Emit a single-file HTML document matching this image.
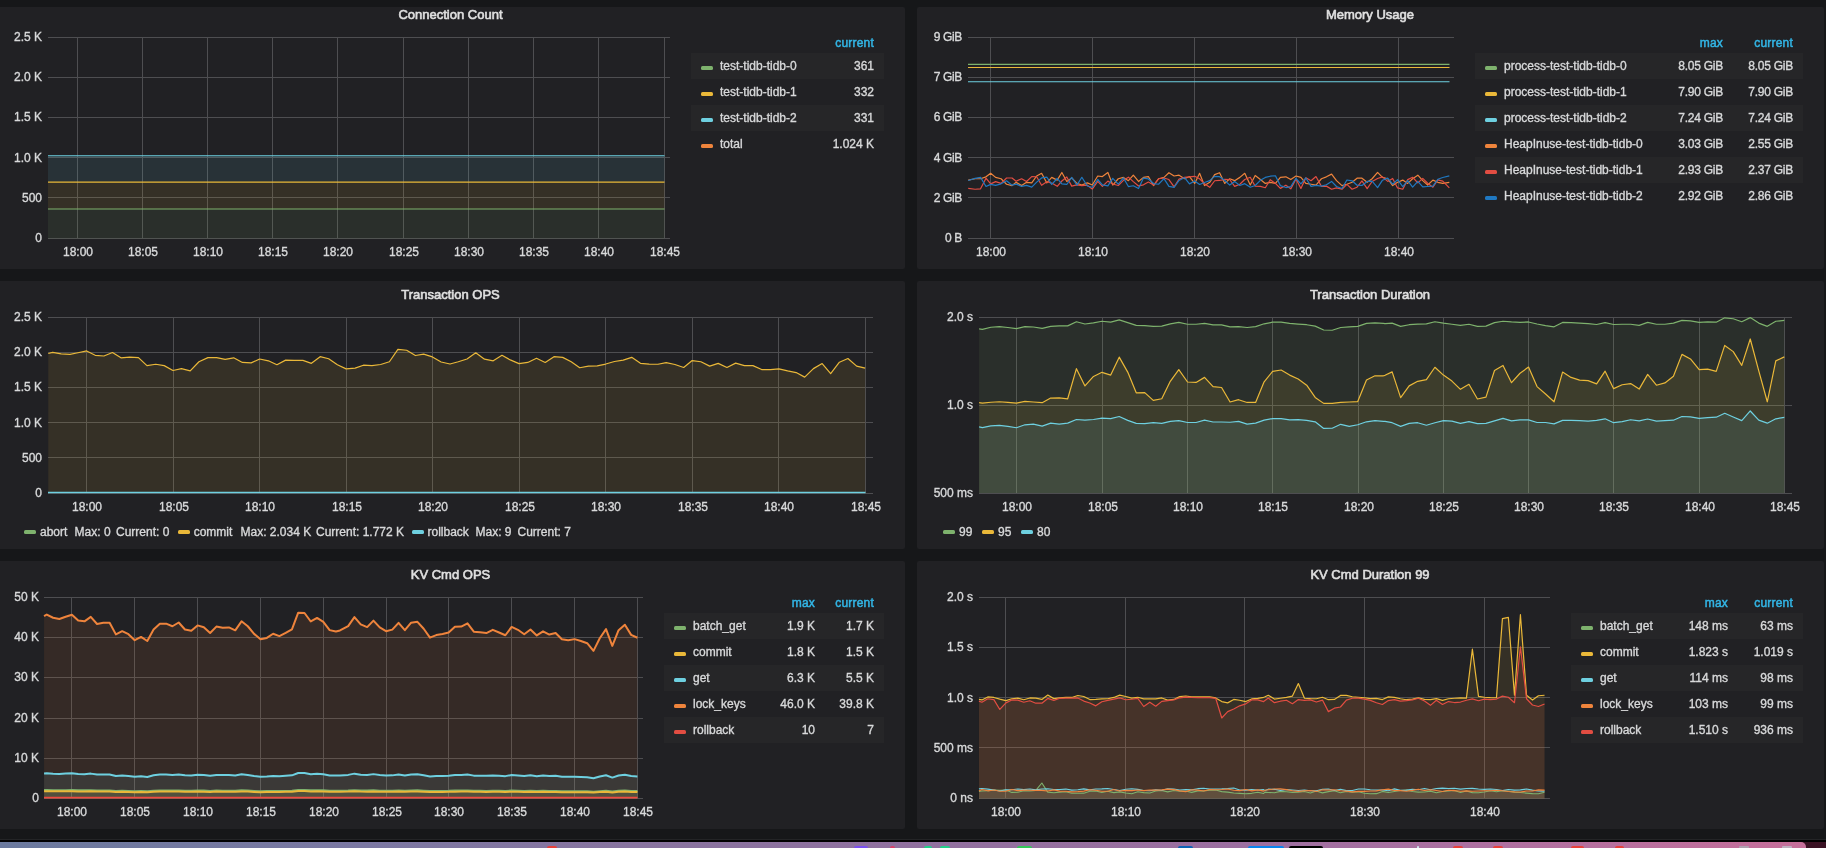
<!DOCTYPE html>
<html lang="en"><head><meta charset="utf-8"><title>TiDB Dashboard</title>
<style>
html,body{margin:0;padding:0;}
body{width:1826px;height:848px;overflow:hidden;background:#161719;position:relative;font-family:"Liberation Sans",sans-serif;font-size:12px;color:#d8d9da;}
.panel{position:absolute;background:#212124;border-radius:2px;}
.t{position:absolute;white-space:nowrap;line-height:14px;height:14px;}
.title{text-align:center;font-size:13px;line-height:20px;height:20px;color:#e0e0e0;-webkit-text-stroke:0.6px #e0e0e0;}
.yl{text-align:right;}
.xl{text-align:center;}
.lh{text-align:right;color:#33b5e5;letter-spacing:0.2px;}
.lv{text-align:right;}
.row{position:absolute;height:26px;}
.row.odd{background:#262628;}
.sw{position:absolute;width:12px;height:3.5px;border-radius:1.5px;}
svg{position:absolute;left:0;top:0;}
.txt{position:absolute;left:0;top:0;width:1826px;height:848px;will-change:transform;-webkit-text-stroke:0.35px #d8d9da;}
.lh{-webkit-text-stroke:0.5px #33b5e5;}
.b1{position:absolute;left:0;top:839px;width:1826px;height:1px;background:#232426;}
.b2{position:absolute;left:0;top:840px;width:1826px;height:2px;background:#000;}
.dock{position:absolute;left:0;top:842px;width:1806px;height:6px;background:linear-gradient(90deg,#6b7a9e 0%,#7b78a2 20%,#88749f 35%,#93709f 55%,#9d6fa0 70%,#ad70a0 82%,#c66f9a 100%);border-top-right-radius:5px;}
.dockend{position:absolute;left:1800px;top:842px;width:26px;height:6px;background:#3b1224;}
.ic{position:absolute;top:846px;height:2px;}
</style></head>
<body>
<div class="panel" style="left:-2px;top:7px;width:907px;height:262px"></div>
<div class="panel" style="left:917px;top:7px;width:907px;height:262px"></div>
<div class="panel" style="left:-2px;top:281px;width:907px;height:268px"></div>
<div class="panel" style="left:917px;top:281px;width:907px;height:268px"></div>
<div class="panel" style="left:-2px;top:561px;width:907px;height:268px"></div>
<div class="panel" style="left:917px;top:561px;width:907px;height:268px"></div>
<svg width="1826" height="848" viewBox="0 0 1826 848">
<rect x="664" y="37" width="1" height="202" fill="#4e4e51"/>
<rect x="598" y="37" width="1" height="202" fill="#4e4e51"/>
<rect x="533" y="37" width="1" height="202" fill="#4e4e51"/>
<rect x="468" y="37" width="1" height="202" fill="#4e4e51"/>
<rect x="403" y="37" width="1" height="202" fill="#4e4e51"/>
<rect x="337" y="37" width="1" height="202" fill="#4e4e51"/>
<rect x="272" y="37" width="1" height="202" fill="#4e4e51"/>
<rect x="207" y="37" width="1" height="202" fill="#4e4e51"/>
<rect x="142" y="37" width="1" height="202" fill="#4e4e51"/>
<rect x="77" y="37" width="1" height="202" fill="#4e4e51"/>
<rect x="48" y="238" width="622" height="1" fill="#4e4e51"/>
<rect x="48" y="197" width="622" height="1" fill="#4e4e51"/>
<rect x="48" y="157" width="622" height="1" fill="#4e4e51"/>
<rect x="48" y="117" width="622" height="1" fill="#4e4e51"/>
<rect x="48" y="77" width="622" height="1" fill="#4e4e51"/>
<rect x="48" y="37" width="622" height="1" fill="#4e4e51"/>
<rect x="48" y="209" width="616.5" height="29.5" fill="#7EB26D" fill-opacity="0.1"/>
<rect x="48" y="182.1" width="616.5" height="26.9" fill="#EAB839" fill-opacity="0.1"/>
<rect x="48" y="155.7" width="616.5" height="26.4" fill="#6ED0E0" fill-opacity="0.1"/>
<line x1="48" y1="209" x2="664.5" y2="209" stroke="#7EB26D" stroke-width="1.1"/>
<line x1="48" y1="182.1" x2="664.5" y2="182.1" stroke="#EAB839" stroke-width="1.1"/>
<line x1="48" y1="155.7" x2="664.5" y2="155.7" stroke="#6ED0E0" stroke-width="1.1"/>
<rect x="1398" y="37" width="1" height="202" fill="#4e4e51"/>
<rect x="1296" y="37" width="1" height="202" fill="#4e4e51"/>
<rect x="1194" y="37" width="1" height="202" fill="#4e4e51"/>
<rect x="1092" y="37" width="1" height="202" fill="#4e4e51"/>
<rect x="990" y="37" width="1" height="202" fill="#4e4e51"/>
<rect x="968" y="238" width="486" height="1" fill="#4e4e51"/>
<rect x="968" y="197" width="486" height="1" fill="#4e4e51"/>
<rect x="968" y="157" width="486" height="1" fill="#4e4e51"/>
<rect x="968" y="117" width="486" height="1" fill="#4e4e51"/>
<rect x="968" y="77" width="486" height="1" fill="#4e4e51"/>
<rect x="968" y="37" width="486" height="1" fill="#4e4e51"/>
<line x1="968" y1="64.4" x2="1449.5" y2="64.4" stroke="#7EB26D" stroke-width="1.1"/>
<line x1="968" y1="67.5" x2="1449.5" y2="67.5" stroke="#EAB839" stroke-width="1.1"/>
<line x1="968" y1="81.8" x2="1449.5" y2="81.8" stroke="#6ED0E0" stroke-width="1.1"/>
<polyline points="968.21,180.12 975.06,178.75 980.54,178.75 986.01,176.83 990.67,173.27 995.6,177.38 1001.07,178.75 1006.55,184.23 1012.03,185.6 1016.13,182.31 1021.61,185.6 1026.54,182.31 1031.74,182.86 1036.67,176.01 1041.6,173.27 1046.8,182.86 1051.73,177.38 1057.21,180.12 1061.86,172.45 1066.79,181.49 1071.72,177.93 1076.92,183.41 1081.85,185.05 1087.33,182.86 1092.26,185.05 1097.73,176.01 1102.39,176.56 1107.86,172.45 1112.79,185.05 1118.27,178.75 1123.47,177.38 1128.4,180.67 1133.33,175.19 1138.53,181.49 1143.46,177.38 1148.39,176.56 1153.59,185.6 1158.52,178.75 1164,177.38 1168.93,172.73 1174.13,176.01 1179.06,175.19 1184.53,178.75 1189.46,176.56 1194.67,183.41 1199.59,173.27 1204.52,185.6 1209.73,182.31 1214.65,174.64 1219.58,172.73 1224.79,183.41 1229.72,178.75 1234.64,180.67 1239.85,177.38 1244.78,173.27 1250.25,185.05 1255.18,175.47 1260.38,179.57 1265.31,183.41 1270.24,182.31 1275.44,183.41 1280.37,177.38 1285.85,176.83 1290.78,179.57 1295.98,176.01 1300.91,177.38 1305.84,183.41 1311.04,184.23 1315.97,185.05 1321.45,178.75 1326.37,176.83 1331.58,174.1 1336.51,180.67 1341.98,185.6 1346.91,184.23 1352.11,182.31 1357.04,178.2 1361.97,178.2 1367.17,182.31 1372.1,178.75 1377.58,172.45 1382.51,177.38 1387.71,178.75 1392.64,185.6 1397.57,182.31 1402.77,180.12 1407.7,183.41 1412.63,178.75 1417.83,175.19 1422.76,180.67 1427.69,185.05 1432.89,180.12 1437.82,182.31 1442.75,183.41 1449.32,182.31" fill="none" stroke="#EF843C" stroke-width="1.2" stroke-linejoin="round"/>
<polyline points="968.21,188.36 975.06,189.26 980.54,188.79 986.01,178.16 990.67,183.91 995.6,181.59 1001.07,183.37 1006.55,178 1012.03,178.02 1016.13,181.2 1021.61,178.73 1026.54,181.45 1031.74,176.67 1036.67,176.73 1041.6,185.25 1046.8,181.72 1051.73,183.05 1057.21,186.3 1061.86,181 1066.79,176.95 1071.72,186.12 1076.92,184.83 1081.85,185.59 1087.33,185.2 1092.26,189.11 1097.73,181.38 1102.39,186.39 1107.86,181.13 1112.79,183.98 1118.27,185.52 1123.47,180.34 1128.4,177.17 1133.33,181.59 1138.53,185.93 1143.46,184.82 1148.39,182.06 1153.59,185.06 1158.52,178.76 1164,177.97 1168.93,179.55 1174.13,186.8 1179.06,179.12 1184.53,177.32 1189.46,176.94 1194.67,176.28 1199.59,178.77 1204.52,183.71 1209.73,187.35 1214.65,180.76 1219.58,180.47 1224.79,179.42 1229.72,179.49 1234.64,186.37 1239.85,184.26 1244.78,179.53 1250.25,177.29 1255.18,186.17 1260.38,186.35 1265.31,187.76 1270.24,179.71 1275.44,183.4 1280.37,188.36 1285.85,185.15 1290.78,188.85 1295.98,179.05 1300.91,188.42 1305.84,177.83 1311.04,180.75 1315.97,176.58 1321.45,186.37 1326.37,186.14 1331.58,189.25 1336.51,187.84 1341.98,189.2 1346.91,184.43 1352.11,189.19 1357.04,187.21 1361.97,180.94 1367.17,188.64 1372.1,181.51 1377.58,178.46 1382.51,176.84 1387.71,181.41 1392.64,178.48 1397.57,187.92 1402.77,189.23 1407.7,179.64 1412.63,177.27 1417.83,182.83 1422.76,178.36 1427.69,183.21 1432.89,187.21 1437.82,179.82 1442.75,181.07 1449.32,187.89" fill="none" stroke="#E24D42" stroke-width="1.2" stroke-linejoin="round"/>
<polyline points="968.21,180.46 975.06,178.42 980.54,177.38 986.01,186.44 990.67,184.37 995.6,185.38 1001.07,183.83 1006.55,180.77 1012.03,185.19 1016.13,184.13 1021.61,186.32 1026.54,185.4 1031.74,187.15 1036.67,182.1 1041.6,177.94 1046.8,177.13 1051.73,184.44 1057.21,178.48 1061.86,183.91 1066.79,184.47 1071.72,177.42 1076.92,185.15 1081.85,177.29 1087.33,185.97 1092.26,187.27 1097.73,179.49 1102.39,184.9 1107.86,185.94 1112.79,178.33 1118.27,184.06 1123.47,177.98 1128.4,186.54 1133.33,185.75 1138.53,188.58 1143.46,178.11 1148.39,178.95 1153.59,183.57 1158.52,184.25 1164,178.6 1168.93,186.41 1174.13,187.4 1179.06,180.44 1184.53,177.54 1189.46,183.89 1194.67,181.08 1199.59,184.47 1204.52,182.51 1209.73,180.67 1214.65,176.38 1219.58,176.7 1224.79,180.5 1229.72,185.1 1234.64,181.54 1239.85,185.47 1244.78,183.65 1250.25,187.24 1255.18,185.49 1260.38,180.33 1265.31,177.45 1270.24,176.22 1275.44,175.75 1280.37,185.64 1285.85,187.54 1290.78,186.62 1295.98,178.29 1300.91,183.94 1305.84,177.99 1311.04,186.31 1315.97,185.32 1321.45,186.2 1326.37,184.74 1331.58,181.38 1336.51,186.52 1341.98,188.55 1346.91,179.99 1352.11,180.79 1357.04,185.21 1361.97,185.41 1367.17,181.4 1372.1,181.22 1377.58,187.65 1382.51,180.2 1387.71,178.17 1392.64,184.21 1397.57,179.59 1402.77,186.68 1407.7,180.59 1412.63,187.12 1417.83,181.31 1422.76,186.87 1427.69,186.5 1432.89,186.22 1437.82,179.28 1442.75,177.52 1449.32,175.9" fill="none" stroke="#1F78C1" stroke-width="1.2" stroke-linejoin="round"/>
<rect x="865" y="317" width="1" height="177" fill="#4e4e51"/>
<rect x="778" y="317" width="1" height="177" fill="#4e4e51"/>
<rect x="692" y="317" width="1" height="177" fill="#4e4e51"/>
<rect x="605" y="317" width="1" height="177" fill="#4e4e51"/>
<rect x="519" y="317" width="1" height="177" fill="#4e4e51"/>
<rect x="432" y="317" width="1" height="177" fill="#4e4e51"/>
<rect x="346" y="317" width="1" height="177" fill="#4e4e51"/>
<rect x="259" y="317" width="1" height="177" fill="#4e4e51"/>
<rect x="173" y="317" width="1" height="177" fill="#4e4e51"/>
<rect x="86" y="317" width="1" height="177" fill="#4e4e51"/>
<rect x="48" y="493" width="825" height="1" fill="#4e4e51"/>
<rect x="48" y="457" width="825" height="1" fill="#4e4e51"/>
<rect x="48" y="422" width="825" height="1" fill="#4e4e51"/>
<rect x="48" y="387" width="825" height="1" fill="#4e4e51"/>
<rect x="48" y="352" width="825" height="1" fill="#4e4e51"/>
<rect x="48" y="317" width="825" height="1" fill="#4e4e51"/>
<polygon points="48.28,353.46 52.65,352.31 61.16,353.92 69.9,354.38 77.95,352.77 86.69,350.93 95.2,355.3 103.94,355.99 112.45,352.54 120.96,357.83 129.7,357.14 138.44,357.6 146.96,365.65 155.7,364.27 164.21,365.65 172.95,370.48 181.46,368.64 190.2,370.94 198.94,361.74 207.91,357.6 216.65,357.6 225.16,359.44 233.67,357.83 242.41,362.43 251.15,362.89 259.66,358.98 268.4,360.82 276.91,364.73 285.65,360.13 294.16,360.36 302.9,360.36 311.41,363.35 320.15,356.68 328.66,358.75 337.4,364.73 346.14,368.87 355.12,368.18 363.4,365.19 371.91,365.65 380.65,364.5 389.39,361.74 397.9,349.32 406.64,350.24 415.38,355.53 423.66,354.15 432.4,356.91 441.14,361.97 450,364.04 458.28,361.74 467.02,358.98 475.76,352.77 484.5,359.21 493.24,360.82 501.98,355.3 510.26,359.9 519,363.58 527.74,362.43 536.48,358.29 545.22,362.43 553.96,356.68 562.71,357.37 571.22,361.74 579.73,367.72 588.47,366.11 597.21,365.88 605.72,364.04 614.46,361.51 623.2,360.13 631.71,357.37 640.45,363.35 649.19,364.04 657.93,364.27 666.21,362.66 674.95,364.5 683.69,367.49 692.2,360.59 700.94,361.74 709.68,366.11 718.19,363.35 726.93,367.49 735.67,363.12 744.41,365.65 752.92,365.65 761.66,369.56 770.41,369.56 778.92,368.87 787.66,370.94 796.17,372.55 804.68,377.15 813.42,368.64 822.16,363.58 830.67,373.7 839.41,362.2 847.92,358.52 856.66,366.11 865.17,368.18 865.17,492.5 48.28,492.5" fill="#EAB839" fill-opacity="0.1"/>
<polyline points="48.28,353.46 52.65,352.31 61.16,353.92 69.9,354.38 77.95,352.77 86.69,350.93 95.2,355.3 103.94,355.99 112.45,352.54 120.96,357.83 129.7,357.14 138.44,357.6 146.96,365.65 155.7,364.27 164.21,365.65 172.95,370.48 181.46,368.64 190.2,370.94 198.94,361.74 207.91,357.6 216.65,357.6 225.16,359.44 233.67,357.83 242.41,362.43 251.15,362.89 259.66,358.98 268.4,360.82 276.91,364.73 285.65,360.13 294.16,360.36 302.9,360.36 311.41,363.35 320.15,356.68 328.66,358.75 337.4,364.73 346.14,368.87 355.12,368.18 363.4,365.19 371.91,365.65 380.65,364.5 389.39,361.74 397.9,349.32 406.64,350.24 415.38,355.53 423.66,354.15 432.4,356.91 441.14,361.97 450,364.04 458.28,361.74 467.02,358.98 475.76,352.77 484.5,359.21 493.24,360.82 501.98,355.3 510.26,359.9 519,363.58 527.74,362.43 536.48,358.29 545.22,362.43 553.96,356.68 562.71,357.37 571.22,361.74 579.73,367.72 588.47,366.11 597.21,365.88 605.72,364.04 614.46,361.51 623.2,360.13 631.71,357.37 640.45,363.35 649.19,364.04 657.93,364.27 666.21,362.66 674.95,364.5 683.69,367.49 692.2,360.59 700.94,361.74 709.68,366.11 718.19,363.35 726.93,367.49 735.67,363.12 744.41,365.65 752.92,365.65 761.66,369.56 770.41,369.56 778.92,368.87 787.66,370.94 796.17,372.55 804.68,377.15 813.42,368.64 822.16,363.58 830.67,373.7 839.41,362.2 847.92,358.52 856.66,366.11 865.17,368.18" fill="none" stroke="#EAB839" stroke-width="1.2" stroke-linejoin="round"/>
<line x1="48" y1="492.4" x2="865.5" y2="492.4" stroke="#6ED0E0" stroke-width="1.5"/>
<rect x="1784" y="317" width="1" height="177" fill="#4e4e51"/>
<rect x="1699" y="317" width="1" height="177" fill="#4e4e51"/>
<rect x="1613" y="317" width="1" height="177" fill="#4e4e51"/>
<rect x="1528" y="317" width="1" height="177" fill="#4e4e51"/>
<rect x="1443" y="317" width="1" height="177" fill="#4e4e51"/>
<rect x="1358" y="317" width="1" height="177" fill="#4e4e51"/>
<rect x="1272" y="317" width="1" height="177" fill="#4e4e51"/>
<rect x="1187" y="317" width="1" height="177" fill="#4e4e51"/>
<rect x="1102" y="317" width="1" height="177" fill="#4e4e51"/>
<rect x="1016" y="317" width="1" height="177" fill="#4e4e51"/>
<rect x="979" y="493" width="813" height="1" fill="#4e4e51"/>
<rect x="979" y="405" width="813" height="1" fill="#4e4e51"/>
<rect x="979" y="317" width="813" height="1" fill="#4e4e51"/>
<polygon points="979.14,328.86 982.36,329.32 990.87,327.25 999.38,326.56 1007.89,327.48 1016.4,328.63 1024.91,326.56 1033.42,327.02 1042.16,328.4 1050.67,326.33 1059.18,325.87 1067.69,325.87 1076.43,321.73 1084.95,324.03 1093.46,322.88 1101.97,321.27 1110.71,322.19 1119.22,319.89 1127.73,322.65 1136.24,325.41 1144.75,325.64 1153.26,326.33 1161.77,326.1 1170.28,323.8 1178.79,322.42 1187.53,324.26 1196.04,324.26 1204.55,323.34 1213.06,324.95 1221.57,324.95 1230.08,326.79 1238.59,326.56 1247.1,327.48 1255.61,326.56 1264.12,323.8 1272.63,322.19 1281.14,322.19 1289.65,323.34 1298.17,324.03 1306.68,324.72 1315.19,326.1 1323.7,330.01 1332.21,330.24 1340.72,327.48 1349.23,326.79 1357.74,326.33 1366.48,323.34 1374.99,322.88 1383.5,323.34 1385,323.57 1392.13,323.11 1400.64,326.33 1409.15,324.72 1417.66,324.03 1426.4,323.8 1434.91,321.73 1443.42,323.11 1451.93,324.26 1460.44,325.41 1468.95,324.26 1477.46,326.33 1485.97,326.1 1494.49,322.65 1503,321.27 1511.51,321.96 1520.02,322.42 1528.53,321.96 1537.04,324.03 1545.55,325.64 1554.06,326.79 1562.57,322.42 1571.08,322.65 1579.59,323.11 1588.1,323.57 1596.61,324.49 1605.12,322.65 1613.63,324.49 1622.14,324.26 1630.65,324.26 1639.16,325.41 1647.67,322.42 1656.41,324.26 1664.92,324.26 1673.43,323.11 1681.94,320.35 1690.45,320.81 1699.19,322.42 1707.71,321.96 1716.22,322.19 1724.73,317.82 1733.24,318.74 1741.75,321.73 1750.26,317.59 1758.77,323.11 1767.28,326.33 1775.79,321.27 1784.3,320.35 1784.3,493 979.14,493" fill="#7EB26D" fill-opacity="0.1"/>
<polygon points="979.14,402.69 982.36,403.15 990.87,402.23 999.38,401.77 1007.89,402.46 1016.4,403.15 1024.91,401.31 1033.42,402 1042.16,402.69 1050.67,398.09 1059.18,397.86 1067.69,398.78 1076.43,368.65 1084.95,385.9 1093.46,376.47 1101.97,372.33 1110.71,375.09 1119.22,357.15 1127.73,372.1 1136.24,392.8 1144.75,392.57 1153.26,400.39 1161.77,398.78 1170.28,381.3 1178.79,369.57 1187.53,381.99 1196.04,382.45 1204.55,377.39 1213.06,386.59 1221.57,387.51 1230.08,402 1238.59,399.7 1247.1,402.46 1255.61,402.46 1264.12,381.76 1272.63,371.41 1281.14,370.03 1289.65,375.09 1298.17,379 1306.68,385.21 1315.19,397.4 1323.7,403.38 1332.21,403.38 1340.72,402.46 1349.23,402 1357.74,401.54 1366.48,379.92 1374.99,375.78 1383.5,375.78 1385,375.32 1392.13,371.87 1400.64,397.63 1409.15,385.9 1417.66,381.3 1426.4,379.69 1434.91,367.27 1443.42,375.09 1451.93,381.07 1460.44,389.35 1468.95,384.29 1477.46,399.01 1485.97,397.17 1494.49,370.49 1503,365.43 1511.51,382.68 1520.02,373.25 1528.53,367.04 1537.04,386.59 1545.55,393.95 1554.06,401.77 1562.57,372.1 1571.08,377.39 1579.59,380.15 1588.1,380.61 1596.61,383.83 1605.12,371.18 1613.63,388.66 1622.14,384.75 1630.65,383.6 1639.16,389.12 1647.67,374.4 1656.41,385.21 1664.92,382.91 1673.43,376.24 1681.94,354.39 1690.45,358.99 1699.19,369.57 1707.71,369.11 1716.22,371.41 1724.73,345.42 1733.24,351.63 1741.75,365.43 1750.26,338.98 1758.77,370.95 1767.28,401.77 1775.79,360.83 1784.3,356.92 1784.3,493 979.14,493" fill="#EAB839" fill-opacity="0.1"/>
<polygon points="979.14,426.85 982.36,427.54 990.87,425.93 999.38,425.47 1007.89,426.39 1016.4,427.77 1024.91,424.78 1033.42,424.09 1042.16,426.16 1050.67,423.17 1059.18,424.09 1067.69,423.17 1076.43,419.49 1084.95,420.18 1093.46,419.49 1101.97,418.11 1110.71,418.57 1119.22,416.5 1127.73,420.41 1136.24,423.4 1144.75,423.63 1153.26,422.71 1161.77,423.4 1170.28,421.33 1178.79,420.64 1187.53,422.48 1196.04,422.48 1204.55,420.18 1213.06,422.02 1221.57,422.02 1230.08,422.25 1238.59,421.33 1247.1,424.09 1255.61,423.17 1264.12,420.18 1272.63,418.57 1281.14,418.57 1289.65,419.95 1298.17,419.72 1306.68,420.41 1315.19,421.79 1323.7,428.46 1332.21,428.23 1340.72,424.32 1349.23,426.39 1357.74,424.78 1366.48,421.79 1374.99,420.64 1383.5,421.33 1385,421.33 1392.13,422.71 1400.64,426.39 1409.15,423.4 1417.66,422.71 1426.4,425.24 1434.91,422.71 1443.42,420.64 1451.93,421.1 1460.44,423.4 1468.95,421.56 1477.46,423.63 1485.97,423.4 1494.49,420.87 1503,418.34 1511.51,420.87 1520.02,419.95 1528.53,419.95 1537.04,422.48 1545.55,422.48 1554.06,423.86 1562.57,420.41 1571.08,420.41 1579.59,420.64 1588.1,421.1 1596.61,420.41 1605.12,418.8 1613.63,422.71 1622.14,421.56 1630.65,419.72 1639.16,420.87 1647.67,419.03 1656.41,421.1 1664.92,420.64 1673.43,420.18 1681.94,416.5 1690.45,416.96 1699.19,418.34 1707.71,417.65 1716.22,417.19 1724.73,413.27 1733.24,416.96 1741.75,420.64 1750.26,410.97 1758.77,420.18 1767.28,423.17 1775.79,418.8 1784.3,417.42 1784.3,493 979.14,493" fill="#6ED0E0" fill-opacity="0.1"/>
<polyline points="979.14,328.86 982.36,329.32 990.87,327.25 999.38,326.56 1007.89,327.48 1016.4,328.63 1024.91,326.56 1033.42,327.02 1042.16,328.4 1050.67,326.33 1059.18,325.87 1067.69,325.87 1076.43,321.73 1084.95,324.03 1093.46,322.88 1101.97,321.27 1110.71,322.19 1119.22,319.89 1127.73,322.65 1136.24,325.41 1144.75,325.64 1153.26,326.33 1161.77,326.1 1170.28,323.8 1178.79,322.42 1187.53,324.26 1196.04,324.26 1204.55,323.34 1213.06,324.95 1221.57,324.95 1230.08,326.79 1238.59,326.56 1247.1,327.48 1255.61,326.56 1264.12,323.8 1272.63,322.19 1281.14,322.19 1289.65,323.34 1298.17,324.03 1306.68,324.72 1315.19,326.1 1323.7,330.01 1332.21,330.24 1340.72,327.48 1349.23,326.79 1357.74,326.33 1366.48,323.34 1374.99,322.88 1383.5,323.34 1385,323.57 1392.13,323.11 1400.64,326.33 1409.15,324.72 1417.66,324.03 1426.4,323.8 1434.91,321.73 1443.42,323.11 1451.93,324.26 1460.44,325.41 1468.95,324.26 1477.46,326.33 1485.97,326.1 1494.49,322.65 1503,321.27 1511.51,321.96 1520.02,322.42 1528.53,321.96 1537.04,324.03 1545.55,325.64 1554.06,326.79 1562.57,322.42 1571.08,322.65 1579.59,323.11 1588.1,323.57 1596.61,324.49 1605.12,322.65 1613.63,324.49 1622.14,324.26 1630.65,324.26 1639.16,325.41 1647.67,322.42 1656.41,324.26 1664.92,324.26 1673.43,323.11 1681.94,320.35 1690.45,320.81 1699.19,322.42 1707.71,321.96 1716.22,322.19 1724.73,317.82 1733.24,318.74 1741.75,321.73 1750.26,317.59 1758.77,323.11 1767.28,326.33 1775.79,321.27 1784.3,320.35" fill="none" stroke="#7EB26D" stroke-width="1.2" stroke-linejoin="round"/>
<polyline points="979.14,402.69 982.36,403.15 990.87,402.23 999.38,401.77 1007.89,402.46 1016.4,403.15 1024.91,401.31 1033.42,402 1042.16,402.69 1050.67,398.09 1059.18,397.86 1067.69,398.78 1076.43,368.65 1084.95,385.9 1093.46,376.47 1101.97,372.33 1110.71,375.09 1119.22,357.15 1127.73,372.1 1136.24,392.8 1144.75,392.57 1153.26,400.39 1161.77,398.78 1170.28,381.3 1178.79,369.57 1187.53,381.99 1196.04,382.45 1204.55,377.39 1213.06,386.59 1221.57,387.51 1230.08,402 1238.59,399.7 1247.1,402.46 1255.61,402.46 1264.12,381.76 1272.63,371.41 1281.14,370.03 1289.65,375.09 1298.17,379 1306.68,385.21 1315.19,397.4 1323.7,403.38 1332.21,403.38 1340.72,402.46 1349.23,402 1357.74,401.54 1366.48,379.92 1374.99,375.78 1383.5,375.78 1385,375.32 1392.13,371.87 1400.64,397.63 1409.15,385.9 1417.66,381.3 1426.4,379.69 1434.91,367.27 1443.42,375.09 1451.93,381.07 1460.44,389.35 1468.95,384.29 1477.46,399.01 1485.97,397.17 1494.49,370.49 1503,365.43 1511.51,382.68 1520.02,373.25 1528.53,367.04 1537.04,386.59 1545.55,393.95 1554.06,401.77 1562.57,372.1 1571.08,377.39 1579.59,380.15 1588.1,380.61 1596.61,383.83 1605.12,371.18 1613.63,388.66 1622.14,384.75 1630.65,383.6 1639.16,389.12 1647.67,374.4 1656.41,385.21 1664.92,382.91 1673.43,376.24 1681.94,354.39 1690.45,358.99 1699.19,369.57 1707.71,369.11 1716.22,371.41 1724.73,345.42 1733.24,351.63 1741.75,365.43 1750.26,338.98 1758.77,370.95 1767.28,401.77 1775.79,360.83 1784.3,356.92" fill="none" stroke="#EAB839" stroke-width="1.2" stroke-linejoin="round"/>
<polyline points="979.14,426.85 982.36,427.54 990.87,425.93 999.38,425.47 1007.89,426.39 1016.4,427.77 1024.91,424.78 1033.42,424.09 1042.16,426.16 1050.67,423.17 1059.18,424.09 1067.69,423.17 1076.43,419.49 1084.95,420.18 1093.46,419.49 1101.97,418.11 1110.71,418.57 1119.22,416.5 1127.73,420.41 1136.24,423.4 1144.75,423.63 1153.26,422.71 1161.77,423.4 1170.28,421.33 1178.79,420.64 1187.53,422.48 1196.04,422.48 1204.55,420.18 1213.06,422.02 1221.57,422.02 1230.08,422.25 1238.59,421.33 1247.1,424.09 1255.61,423.17 1264.12,420.18 1272.63,418.57 1281.14,418.57 1289.65,419.95 1298.17,419.72 1306.68,420.41 1315.19,421.79 1323.7,428.46 1332.21,428.23 1340.72,424.32 1349.23,426.39 1357.74,424.78 1366.48,421.79 1374.99,420.64 1383.5,421.33 1385,421.33 1392.13,422.71 1400.64,426.39 1409.15,423.4 1417.66,422.71 1426.4,425.24 1434.91,422.71 1443.42,420.64 1451.93,421.1 1460.44,423.4 1468.95,421.56 1477.46,423.63 1485.97,423.4 1494.49,420.87 1503,418.34 1511.51,420.87 1520.02,419.95 1528.53,419.95 1537.04,422.48 1545.55,422.48 1554.06,423.86 1562.57,420.41 1571.08,420.41 1579.59,420.64 1588.1,421.1 1596.61,420.41 1605.12,418.8 1613.63,422.71 1622.14,421.56 1630.65,419.72 1639.16,420.87 1647.67,419.03 1656.41,421.1 1664.92,420.64 1673.43,420.18 1681.94,416.5 1690.45,416.96 1699.19,418.34 1707.71,417.65 1716.22,417.19 1724.73,413.27 1733.24,416.96 1741.75,420.64 1750.26,410.97 1758.77,420.18 1767.28,423.17 1775.79,418.8 1784.3,417.42" fill="none" stroke="#6ED0E0" stroke-width="1.2" stroke-linejoin="round"/>
<rect x="637" y="597" width="1" height="202" fill="#4e4e51"/>
<rect x="574" y="597" width="1" height="202" fill="#4e4e51"/>
<rect x="511" y="597" width="1" height="202" fill="#4e4e51"/>
<rect x="448" y="597" width="1" height="202" fill="#4e4e51"/>
<rect x="386" y="597" width="1" height="202" fill="#4e4e51"/>
<rect x="323" y="597" width="1" height="202" fill="#4e4e51"/>
<rect x="260" y="597" width="1" height="202" fill="#4e4e51"/>
<rect x="197" y="597" width="1" height="202" fill="#4e4e51"/>
<rect x="134" y="597" width="1" height="202" fill="#4e4e51"/>
<rect x="71" y="597" width="1" height="202" fill="#4e4e51"/>
<rect x="44" y="798" width="599" height="1" fill="#4e4e51"/>
<rect x="44" y="758" width="599" height="1" fill="#4e4e51"/>
<rect x="44" y="718" width="599" height="1" fill="#4e4e51"/>
<rect x="44" y="677" width="599" height="1" fill="#4e4e51"/>
<rect x="44" y="637" width="599" height="1" fill="#4e4e51"/>
<rect x="44" y="597" width="599" height="1" fill="#4e4e51"/>
<polygon points="44.07,790.12 46.79,790.04 53.07,790.19 59.35,790.24 65.64,790.14 71.92,790.04 78.2,790.31 84.48,790.35 90.76,790.15 97.04,790.47 103.32,790.42 109.61,790.42 115.89,790.95 122.17,790.8 128.45,790.94 134.73,791.22 141.01,791.07 147.29,791.26 153.58,790.72 159.86,790.46 166.14,790.46 172.42,790.58 178.7,790.4 184.98,790.72 191.27,790.79 197.55,790.54 203.83,790.62 210.11,790.89 216.39,790.59 222.67,790.65 228.95,790.63 235.24,790.76 241.52,790.35 247.8,790.58 254.08,790.93 260.53,791.18 266.81,791.11 273.09,790.92 279.38,791.03 285.66,790.88 291.94,790.72 298.22,789.95 304.5,789.97 310.78,790.36 317.06,790.19 323.35,790.37 329.63,790.76 335.91,790.82 340,790.77 348.15,790.57 354.43,790.15 360.71,790.49 367.16,790.61 373.44,790.32 379.73,790.63 386.01,790.8 392.29,790.73 398.57,790.42 404.85,790.76 411.13,790.41 417.42,790.37 423.7,790.69 429.98,791.1 436.26,790.98 442.54,790.94 448.65,790.86 454.93,790.6 461.22,790.59 467.5,790.44 473.78,790.83 480.06,790.86 486.34,790.89 492.79,790.74 499.07,790.86 505.36,790.99 511.64,790.61 517.92,790.74 524.2,790.94 530.48,790.72 536.76,791 543.04,790.81 549.33,790.96 555.61,790.89 561.89,791.18 568.17,791.22 574.62,791.17 580.9,791.26 587.19,791.36 593.47,791.71 599.75,791.13 606.03,790.71 612.31,791.48 618.59,790.76 624.87,790.51 631.16,790.97 637.44,791.11 637.44,798.5 44.07,798.5" fill="#7EB26D" fill-opacity="0.1"/>
<polygon points="44.07,791.21 46.79,791.14 53.07,791.27 59.35,791.32 65.64,791.23 71.92,791.15 78.2,791.38 84.48,791.41 90.76,791.24 97.04,791.52 103.32,791.47 109.61,791.47 115.89,791.94 122.17,791.81 128.45,791.93 134.73,792.17 141.01,792.04 147.29,792.2 153.58,791.74 159.86,791.51 166.14,791.51 172.42,791.61 178.7,791.46 184.98,791.74 191.27,791.79 197.55,791.58 203.83,791.65 210.11,791.88 216.39,791.62 222.67,791.67 228.95,791.66 235.24,791.77 241.52,791.41 247.8,791.61 254.08,791.92 260.53,792.13 266.81,792.08 273.09,791.91 279.38,792 285.66,791.87 291.94,791.73 298.22,791.07 304.5,791.08 310.78,791.42 317.06,791.28 323.35,791.43 329.63,791.77 335.91,791.82 340,791.78 348.15,791.6 354.43,791.24 360.71,791.53 367.16,791.64 373.44,791.39 379.73,791.66 386.01,791.81 392.29,791.75 398.57,791.47 404.85,791.77 411.13,791.47 417.42,791.43 423.7,791.71 429.98,792.06 436.26,791.96 442.54,791.92 448.65,791.86 454.93,791.63 461.22,791.62 467.5,791.49 473.78,791.83 480.06,791.85 486.34,791.88 492.79,791.75 499.07,791.86 505.36,791.97 511.64,791.64 517.92,791.75 524.2,791.93 530.48,791.74 536.76,791.98 543.04,791.81 549.33,791.94 555.61,791.88 561.89,792.13 568.17,792.17 574.62,792.13 580.9,792.2 587.19,792.29 593.47,792.59 599.75,792.09 606.03,791.72 612.31,792.4 618.59,791.77 624.87,791.55 631.16,791.96 637.44,792.07 637.44,798.5 44.07,798.5" fill="#EAB839" fill-opacity="0.1"/>
<polygon points="44.07,773.53 46.79,773.3 53.07,773.74 59.35,773.9 65.64,773.6 71.92,773.32 78.2,774.11 84.48,774.23 90.76,773.62 97.04,774.6 103.32,774.43 109.61,774.43 115.89,776.02 122.17,775.57 128.45,775.99 134.73,776.81 141.01,776.37 147.29,776.92 153.58,775.34 159.86,774.55 166.14,774.55 172.42,774.9 178.7,774.39 184.98,775.34 191.27,775.53 197.55,774.78 203.83,775.04 210.11,775.83 216.39,774.95 222.67,775.11 228.95,775.06 235.24,775.46 241.52,774.23 247.8,774.9 254.08,775.95 260.53,776.69 266.81,776.5 273.09,775.92 279.38,776.25 285.66,775.81 291.94,775.32 298.22,773.04 304.5,773.09 310.78,774.25 317.06,773.76 323.35,774.3 329.63,775.44 335.91,775.62 340,775.48 348.15,774.88 354.43,773.64 360.71,774.64 367.16,775.02 373.44,774.13 379.73,775.06 386.01,775.57 392.29,775.37 398.57,774.43 404.85,775.44 411.13,774.41 417.42,774.3 423.7,775.25 429.98,776.46 436.26,776.11 442.54,775.97 448.65,775.76 454.93,774.97 461.22,774.95 467.5,774.5 473.78,775.64 480.06,775.74 486.34,775.83 492.79,775.39 499.07,775.76 505.36,776.13 511.64,774.99 517.92,775.39 524.2,775.99 530.48,775.34 536.76,776.16 543.04,775.6 549.33,776.04 555.61,775.83 561.89,776.69 568.17,776.83 574.62,776.67 580.9,776.92 587.19,777.23 593.47,778.27 599.75,776.55 606.03,775.3 612.31,777.6 618.59,775.44 624.87,774.69 631.16,776.09 637.44,776.48 637.44,798.5 44.07,798.5" fill="#6ED0E0" fill-opacity="0.1"/>
<polygon points="44.07,616.22 46.79,614.52 53.07,617.75 59.35,618.94 65.64,616.73 71.92,614.69 78.2,620.47 84.48,621.31 90.76,616.9 97.04,624.03 103.32,622.84 109.61,622.84 115.89,634.39 122.17,631.16 128.45,634.22 134.73,640.16 141.01,636.93 147.29,641.01 153.58,629.46 159.86,623.69 166.14,623.69 172.42,626.24 178.7,622.5 184.98,629.46 191.27,630.82 197.55,625.39 203.83,627.26 210.11,633.03 216.39,626.58 222.67,627.77 228.95,627.43 235.24,630.31 241.52,621.31 247.8,626.24 254.08,633.88 260.53,639.31 266.81,637.95 273.09,633.71 279.38,636.08 285.66,632.86 291.94,629.29 298.22,612.66 304.5,613 310.78,621.48 317.06,617.92 323.35,621.82 329.63,630.14 335.91,631.5 340,630.48 348.15,626.07 354.43,617.07 360.71,624.37 367.16,627.09 373.44,620.64 379.73,627.43 386.01,631.16 392.29,629.63 398.57,622.84 404.85,630.14 411.13,622.67 417.42,621.82 423.7,628.78 429.98,637.61 436.26,635.07 442.54,634.05 448.65,632.52 454.93,626.75 461.22,626.58 467.5,623.35 473.78,631.67 480.06,632.35 486.34,633.03 492.79,629.8 499.07,632.52 505.36,635.24 511.64,626.92 517.92,629.8 524.2,634.22 530.48,629.46 536.76,635.41 543.04,631.33 549.33,634.56 555.61,633.03 561.89,639.31 568.17,640.33 574.62,639.14 580.9,641.01 587.19,643.21 593.47,650.85 599.75,638.29 606.03,629.12 612.31,645.93 618.59,630.14 624.87,624.71 631.16,634.9 637.44,637.78 637.44,798.5 44.07,798.5" fill="#EF843C" fill-opacity="0.1"/>
<polyline points="44.07,790.12 46.79,790.04 53.07,790.19 59.35,790.24 65.64,790.14 71.92,790.04 78.2,790.31 84.48,790.35 90.76,790.15 97.04,790.47 103.32,790.42 109.61,790.42 115.89,790.95 122.17,790.8 128.45,790.94 134.73,791.22 141.01,791.07 147.29,791.26 153.58,790.72 159.86,790.46 166.14,790.46 172.42,790.58 178.7,790.4 184.98,790.72 191.27,790.79 197.55,790.54 203.83,790.62 210.11,790.89 216.39,790.59 222.67,790.65 228.95,790.63 235.24,790.76 241.52,790.35 247.8,790.58 254.08,790.93 260.53,791.18 266.81,791.11 273.09,790.92 279.38,791.03 285.66,790.88 291.94,790.72 298.22,789.95 304.5,789.97 310.78,790.36 317.06,790.19 323.35,790.37 329.63,790.76 335.91,790.82 340,790.77 348.15,790.57 354.43,790.15 360.71,790.49 367.16,790.61 373.44,790.32 379.73,790.63 386.01,790.8 392.29,790.73 398.57,790.42 404.85,790.76 411.13,790.41 417.42,790.37 423.7,790.69 429.98,791.1 436.26,790.98 442.54,790.94 448.65,790.86 454.93,790.6 461.22,790.59 467.5,790.44 473.78,790.83 480.06,790.86 486.34,790.89 492.79,790.74 499.07,790.86 505.36,790.99 511.64,790.61 517.92,790.74 524.2,790.94 530.48,790.72 536.76,791 543.04,790.81 549.33,790.96 555.61,790.89 561.89,791.18 568.17,791.22 574.62,791.17 580.9,791.26 587.19,791.36 593.47,791.71 599.75,791.13 606.03,790.71 612.31,791.48 618.59,790.76 624.87,790.51 631.16,790.97 637.44,791.11" fill="none" stroke="#7EB26D" stroke-width="2" stroke-linejoin="round"/>
<polyline points="44.07,791.21 46.79,791.14 53.07,791.27 59.35,791.32 65.64,791.23 71.92,791.15 78.2,791.38 84.48,791.41 90.76,791.24 97.04,791.52 103.32,791.47 109.61,791.47 115.89,791.94 122.17,791.81 128.45,791.93 134.73,792.17 141.01,792.04 147.29,792.2 153.58,791.74 159.86,791.51 166.14,791.51 172.42,791.61 178.7,791.46 184.98,791.74 191.27,791.79 197.55,791.58 203.83,791.65 210.11,791.88 216.39,791.62 222.67,791.67 228.95,791.66 235.24,791.77 241.52,791.41 247.8,791.61 254.08,791.92 260.53,792.13 266.81,792.08 273.09,791.91 279.38,792 285.66,791.87 291.94,791.73 298.22,791.07 304.5,791.08 310.78,791.42 317.06,791.28 323.35,791.43 329.63,791.77 335.91,791.82 340,791.78 348.15,791.6 354.43,791.24 360.71,791.53 367.16,791.64 373.44,791.39 379.73,791.66 386.01,791.81 392.29,791.75 398.57,791.47 404.85,791.77 411.13,791.47 417.42,791.43 423.7,791.71 429.98,792.06 436.26,791.96 442.54,791.92 448.65,791.86 454.93,791.63 461.22,791.62 467.5,791.49 473.78,791.83 480.06,791.85 486.34,791.88 492.79,791.75 499.07,791.86 505.36,791.97 511.64,791.64 517.92,791.75 524.2,791.93 530.48,791.74 536.76,791.98 543.04,791.81 549.33,791.94 555.61,791.88 561.89,792.13 568.17,792.17 574.62,792.13 580.9,792.2 587.19,792.29 593.47,792.59 599.75,792.09 606.03,791.72 612.31,792.4 618.59,791.77 624.87,791.55 631.16,791.96 637.44,792.07" fill="none" stroke="#EAB839" stroke-width="2" stroke-linejoin="round"/>
<polyline points="44.07,773.53 46.79,773.3 53.07,773.74 59.35,773.9 65.64,773.6 71.92,773.32 78.2,774.11 84.48,774.23 90.76,773.62 97.04,774.6 103.32,774.43 109.61,774.43 115.89,776.02 122.17,775.57 128.45,775.99 134.73,776.81 141.01,776.37 147.29,776.92 153.58,775.34 159.86,774.55 166.14,774.55 172.42,774.9 178.7,774.39 184.98,775.34 191.27,775.53 197.55,774.78 203.83,775.04 210.11,775.83 216.39,774.95 222.67,775.11 228.95,775.06 235.24,775.46 241.52,774.23 247.8,774.9 254.08,775.95 260.53,776.69 266.81,776.5 273.09,775.92 279.38,776.25 285.66,775.81 291.94,775.32 298.22,773.04 304.5,773.09 310.78,774.25 317.06,773.76 323.35,774.3 329.63,775.44 335.91,775.62 340,775.48 348.15,774.88 354.43,773.64 360.71,774.64 367.16,775.02 373.44,774.13 379.73,775.06 386.01,775.57 392.29,775.37 398.57,774.43 404.85,775.44 411.13,774.41 417.42,774.3 423.7,775.25 429.98,776.46 436.26,776.11 442.54,775.97 448.65,775.76 454.93,774.97 461.22,774.95 467.5,774.5 473.78,775.64 480.06,775.74 486.34,775.83 492.79,775.39 499.07,775.76 505.36,776.13 511.64,774.99 517.92,775.39 524.2,775.99 530.48,775.34 536.76,776.16 543.04,775.6 549.33,776.04 555.61,775.83 561.89,776.69 568.17,776.83 574.62,776.67 580.9,776.92 587.19,777.23 593.47,778.27 599.75,776.55 606.03,775.3 612.31,777.6 618.59,775.44 624.87,774.69 631.16,776.09 637.44,776.48" fill="none" stroke="#6ED0E0" stroke-width="2" stroke-linejoin="round"/>
<polyline points="44.07,616.22 46.79,614.52 53.07,617.75 59.35,618.94 65.64,616.73 71.92,614.69 78.2,620.47 84.48,621.31 90.76,616.9 97.04,624.03 103.32,622.84 109.61,622.84 115.89,634.39 122.17,631.16 128.45,634.22 134.73,640.16 141.01,636.93 147.29,641.01 153.58,629.46 159.86,623.69 166.14,623.69 172.42,626.24 178.7,622.5 184.98,629.46 191.27,630.82 197.55,625.39 203.83,627.26 210.11,633.03 216.39,626.58 222.67,627.77 228.95,627.43 235.24,630.31 241.52,621.31 247.8,626.24 254.08,633.88 260.53,639.31 266.81,637.95 273.09,633.71 279.38,636.08 285.66,632.86 291.94,629.29 298.22,612.66 304.5,613 310.78,621.48 317.06,617.92 323.35,621.82 329.63,630.14 335.91,631.5 340,630.48 348.15,626.07 354.43,617.07 360.71,624.37 367.16,627.09 373.44,620.64 379.73,627.43 386.01,631.16 392.29,629.63 398.57,622.84 404.85,630.14 411.13,622.67 417.42,621.82 423.7,628.78 429.98,637.61 436.26,635.07 442.54,634.05 448.65,632.52 454.93,626.75 461.22,626.58 467.5,623.35 473.78,631.67 480.06,632.35 486.34,633.03 492.79,629.8 499.07,632.52 505.36,635.24 511.64,626.92 517.92,629.8 524.2,634.22 530.48,629.46 536.76,635.41 543.04,631.33 549.33,634.56 555.61,633.03 561.89,639.31 568.17,640.33 574.62,639.14 580.9,641.01 587.19,643.21 593.47,650.85 599.75,638.29 606.03,629.12 612.31,645.93 618.59,630.14 624.87,624.71 631.16,634.9 637.44,637.78" fill="none" stroke="#EF843C" stroke-width="2" stroke-linejoin="round"/>
<line x1="44" y1="797.7" x2="637.5" y2="797.7" stroke="#f04a40" stroke-width="1.8"/>
<rect x="1484" y="597" width="1" height="202" fill="#4e4e51"/>
<rect x="1364" y="597" width="1" height="202" fill="#4e4e51"/>
<rect x="1244" y="597" width="1" height="202" fill="#4e4e51"/>
<rect x="1125" y="597" width="1" height="202" fill="#4e4e51"/>
<rect x="1005" y="597" width="1" height="202" fill="#4e4e51"/>
<rect x="979" y="798" width="571" height="1" fill="#4e4e51"/>
<rect x="979" y="747" width="571" height="1" fill="#4e4e51"/>
<rect x="979" y="697" width="571" height="1" fill="#4e4e51"/>
<rect x="979" y="647" width="571" height="1" fill="#4e4e51"/>
<rect x="979" y="597" width="571" height="1" fill="#4e4e51"/>
<polygon points="978.94,791.55 981.9,791.05 987.81,790.67 993.89,790.08 999.81,790.4 1005.89,790.02 1011.8,792.4 1017.88,792.22 1023.8,790.78 1029.87,790.97 1035.79,790.33 1041.87,783 1047.78,792.17 1053.86,792.75 1059.78,792.16 1065.85,791.8 1071.77,793.25 1077.85,793.32 1083.76,793.17 1089.84,791.28 1095.76,790.86 1101.83,792.41 1107.75,791.28 1113.83,792.65 1119.74,791.9 1125.82,792.97 1131.74,793.81 1137.81,791.7 1143.73,792.64 1149.81,793.05 1155.72,791.04 1161.8,790.45 1167.72,791.85 1173.8,790.56 1179.71,791.18 1185.79,791.07 1191.7,792.37 1197.78,790.85 1203.7,790.88 1209.78,790.11 1215.69,789.97 1221.77,791.61 1227.68,792.16 1233.76,792.97 1239.68,793.4 1245.76,793.82 1251.67,793.33 1257.75,792.25 1263.66,793.48 1265,792.1 1268.3,792.45 1274.41,792.69 1280.35,791.35 1286.46,791.71 1292.41,792.34 1298.35,792.15 1304.46,791.43 1310.4,792.95 1316.35,791.02 1322.46,792.87 1328.4,791.62 1334.35,790.79 1340.45,792.78 1346.4,791.47 1352.34,792.09 1358.45,791.76 1364.39,793.24 1370.34,793.8 1376.45,793.67 1382.39,791.39 1388.34,792.54 1394.44,791.46 1400.39,790.47 1406.5,789.99 1412.44,791.49 1418.38,792.13 1424.49,791.93 1430.44,791.13 1436.38,792.67 1442.49,791.54 1448.43,790.89 1454.38,790.42 1460.49,792.56 1466.43,790.92 1472.37,792.63 1478.48,792.68 1484.43,791.94 1490.37,790.72 1496.48,791.83 1502.42,790.65 1508.37,791.21 1514.48,792.13 1520.42,792.53 1526.53,793.1 1532.47,793.65 1538.42,793.69 1544.53,792.16 1544.53,798.5 978.94,798.5" fill="#7EB26D" fill-opacity="0.1"/>
<polygon points="978.94,699.43 981.9,699.92 987.81,696.97 993.89,697.46 999.81,699.1 1005.89,700.58 1011.8,698.77 1017.88,698.12 1023.8,699.76 1029.87,697.95 1035.79,698.12 1041.87,699.43 1047.78,694.99 1053.86,698.61 1059.78,697.79 1065.85,697.46 1071.77,697.46 1077.85,695.49 1083.76,696.47 1089.84,699.59 1095.76,699.43 1101.83,698.94 1107.75,698.77 1113.83,697.46 1119.74,695.16 1125.82,696.47 1131.74,698.12 1137.81,697.29 1143.73,698.94 1149.81,698.94 1155.72,698.94 1161.8,697.95 1167.72,700.09 1173.8,699.43 1179.71,696.64 1185.79,695.98 1191.7,696.8 1197.78,696.97 1203.7,696.8 1209.78,696.8 1215.69,697.95 1221.77,701.57 1227.68,702.88 1233.76,699.43 1239.68,700.25 1245.76,701.57 1251.67,698.94 1257.75,698.44 1263.66,697.29 1265,696.75 1268.3,695.27 1274.41,699.06 1280.35,698.24 1286.46,697.41 1292.41,696.09 1298.35,683.54 1304.46,698.24 1310.4,698.57 1316.35,698.73 1322.46,697.25 1328.4,699.72 1334.35,699.39 1340.45,695.43 1346.4,695.43 1352.34,696.75 1358.45,697.25 1364.39,697.74 1370.34,698.57 1376.45,698.4 1382.39,699.56 1388.34,696.92 1394.44,697.41 1400.39,698.73 1406.5,699.72 1412.44,699.06 1418.38,697.91 1424.49,699.39 1430.44,699.56 1436.38,698.57 1442.49,700.39 1448.43,698.73 1454.38,698.24 1460.49,697.91 1466.43,698.07 1472.37,649.2 1478.48,696.42 1484.43,697.25 1490.37,697.58 1496.48,697.74 1502.42,618.66 1508.37,617.34 1514.48,695.27 1520.42,614.69 1526.53,695.27 1532.47,700.06 1538.42,695.76 1544.53,695.27 1544.53,798.5 978.94,798.5" fill="#EAB839" fill-opacity="0.1"/>
<polygon points="978.94,788.89 981.9,788.5 987.81,789.14 993.89,789.97 999.81,790.98 1005.89,789.83 1011.8,789.77 1017.88,789.05 1023.8,789.66 1029.87,788.97 1035.79,789.87 1041.87,788.99 1047.78,788.77 1053.86,789.43 1059.78,789.43 1065.85,789.08 1071.77,790.11 1077.85,789.7 1083.76,788.91 1089.84,789.86 1095.76,788.98 1101.83,788.87 1107.75,788.44 1113.83,789.48 1119.74,790.53 1125.82,789.29 1131.74,788.72 1137.81,789.34 1143.73,790.47 1149.81,790.72 1155.72,789.78 1161.8,790.19 1167.72,788.77 1173.8,789.01 1179.71,790.06 1185.79,789.43 1191.7,789.86 1197.78,788.67 1203.7,788.19 1209.78,788.93 1215.69,788.95 1221.77,788.83 1227.68,788.51 1233.76,787.96 1239.68,790 1245.76,790.12 1251.67,789.59 1257.75,790.07 1263.66,789.59 1265,790.59 1268.3,789.13 1274.41,789.33 1280.35,790.4 1286.46,789.57 1292.41,790.04 1298.35,790.53 1304.46,790.06 1310.4,790.68 1316.35,790.79 1322.46,789.25 1328.4,788.96 1334.35,790.49 1340.45,789.33 1346.4,790.65 1352.34,790.48 1358.45,789.02 1364.39,789.05 1370.34,789.82 1376.45,790 1382.39,790.05 1388.34,790.7 1394.44,788.89 1400.39,790.36 1406.5,790.13 1412.44,789.24 1418.38,789.69 1424.49,788.47 1430.44,789.71 1436.38,788.49 1442.49,788.15 1448.43,788.54 1454.38,788.18 1460.49,789.09 1466.43,788.57 1472.37,788.42 1478.48,789.03 1484.43,789.41 1490.37,789.02 1496.48,789.56 1502.42,790.58 1508.37,789.45 1514.48,790.1 1520.42,789.85 1526.53,789.03 1532.47,790.14 1538.42,791 1544.53,791.14 1544.53,798.5 978.94,798.5" fill="#6ED0E0" fill-opacity="0.1"/>
<polygon points="978.94,790.96 981.9,789.48 987.81,790.83 993.89,790.04 999.81,791.19 1005.89,791.31 1011.8,789.55 1017.88,790.66 1023.8,790.12 1029.87,790.32 1035.79,790.42 1041.87,790.37 1047.78,791.07 1053.86,789.85 1059.78,791.09 1065.85,791.3 1071.77,791.91 1077.85,791.59 1083.76,791.1 1089.84,789.69 1095.76,790.32 1101.83,791.24 1107.75,791.31 1113.83,789.56 1119.74,791.03 1125.82,790.34 1131.74,790.61 1137.81,790.05 1143.73,790.58 1149.81,789.96 1155.72,790.15 1161.8,789.87 1167.72,789.14 1173.8,789.58 1179.71,790.84 1185.79,791.6 1191.7,789.8 1197.78,790.1 1203.7,790.95 1209.78,789.51 1215.69,789.76 1221.77,789.5 1227.68,789.02 1233.76,790.24 1239.68,790.62 1245.76,789.53 1251.67,790.84 1257.75,789.9 1263.66,791.09 1265,790.2 1268.3,789.76 1274.41,788.97 1280.35,788.87 1286.46,789.65 1292.41,790.74 1298.35,791.34 1304.46,790.7 1310.4,790.46 1316.35,791.41 1322.46,789.82 1328.4,790.07 1334.35,789.71 1340.45,790.71 1346.4,791.1 1352.34,791.84 1358.45,791.37 1364.39,791.35 1370.34,790.96 1376.45,790.89 1382.39,789.76 1388.34,789.11 1394.44,790.55 1400.39,790.66 1406.5,791.27 1412.44,790.34 1418.38,789.17 1424.49,790.51 1430.44,789.75 1436.38,790.54 1442.49,791.58 1448.43,790.24 1454.38,790.66 1460.49,791.26 1466.43,790.89 1472.37,791.21 1478.48,790.93 1484.43,790.71 1490.37,790.68 1496.48,790.26 1502.42,790.79 1508.37,791.5 1514.48,791.84 1520.42,791.95 1526.53,790.99 1532.47,790.95 1538.42,789.85 1544.53,790.08 1544.53,798.5 978.94,798.5" fill="#EF843C" fill-opacity="0.1"/>
<polygon points="978.94,701.07 981.9,702.22 987.81,698.77 993.89,699.59 999.81,709.45 1005.89,702.88 1011.8,699.92 1017.88,700.09 1023.8,702.22 1029.87,700.74 1035.79,703.21 1041.87,703.21 1047.78,698.44 1053.86,700.42 1059.78,698.28 1065.85,698.12 1071.77,698.12 1077.85,697.95 1083.76,701.07 1089.84,703.04 1095.76,705.84 1101.83,701.73 1107.75,700.42 1113.83,699.1 1119.74,697.95 1125.82,699.76 1131.74,699.27 1137.81,698.44 1143.73,706.5 1149.81,702.22 1155.72,706.17 1161.8,701.4 1167.72,700.58 1173.8,699.92 1179.71,697.79 1185.79,697.13 1191.7,697.46 1197.78,697.62 1203.7,697.62 1209.78,697.62 1215.69,698.28 1221.77,718 1227.68,711.59 1233.76,708.96 1239.68,705.84 1245.76,703.87 1251.67,699.92 1257.75,699.92 1263.66,701.57 1265,700.39 1268.3,698.07 1274.41,702.7 1280.35,701.21 1286.46,700.22 1292.41,703.69 1298.35,699.56 1304.46,700.39 1310.4,699.89 1316.35,702.04 1322.46,700.06 1328.4,711.61 1334.35,708.15 1340.45,706.99 1346.4,700.06 1352.34,698.24 1358.45,698.07 1364.39,699.06 1370.34,700.39 1376.45,702.7 1382.39,704.51 1388.34,700.55 1394.44,699.56 1400.39,701.05 1406.5,700.55 1412.44,699.89 1418.38,698.24 1424.49,701.05 1430.44,705.34 1436.38,700.22 1442.49,704.51 1448.43,701.54 1454.38,702.53 1460.49,702.04 1466.43,700.22 1472.37,698.9 1478.48,700.72 1484.43,699.06 1490.37,699.72 1496.48,699.06 1502.42,696.09 1508.37,697.25 1514.48,702.7 1520.42,646.73 1526.53,698.73 1532.47,705.01 1538.42,706.49 1544.53,704.02 1544.53,798.5 978.94,798.5" fill="#E24D42" fill-opacity="0.1"/>
<polyline points="978.94,791.55 981.9,791.05 987.81,790.67 993.89,790.08 999.81,790.4 1005.89,790.02 1011.8,792.4 1017.88,792.22 1023.8,790.78 1029.87,790.97 1035.79,790.33 1041.87,783 1047.78,792.17 1053.86,792.75 1059.78,792.16 1065.85,791.8 1071.77,793.25 1077.85,793.32 1083.76,793.17 1089.84,791.28 1095.76,790.86 1101.83,792.41 1107.75,791.28 1113.83,792.65 1119.74,791.9 1125.82,792.97 1131.74,793.81 1137.81,791.7 1143.73,792.64 1149.81,793.05 1155.72,791.04 1161.8,790.45 1167.72,791.85 1173.8,790.56 1179.71,791.18 1185.79,791.07 1191.7,792.37 1197.78,790.85 1203.7,790.88 1209.78,790.11 1215.69,789.97 1221.77,791.61 1227.68,792.16 1233.76,792.97 1239.68,793.4 1245.76,793.82 1251.67,793.33 1257.75,792.25 1263.66,793.48 1265,792.1 1268.3,792.45 1274.41,792.69 1280.35,791.35 1286.46,791.71 1292.41,792.34 1298.35,792.15 1304.46,791.43 1310.4,792.95 1316.35,791.02 1322.46,792.87 1328.4,791.62 1334.35,790.79 1340.45,792.78 1346.4,791.47 1352.34,792.09 1358.45,791.76 1364.39,793.24 1370.34,793.8 1376.45,793.67 1382.39,791.39 1388.34,792.54 1394.44,791.46 1400.39,790.47 1406.5,789.99 1412.44,791.49 1418.38,792.13 1424.49,791.93 1430.44,791.13 1436.38,792.67 1442.49,791.54 1448.43,790.89 1454.38,790.42 1460.49,792.56 1466.43,790.92 1472.37,792.63 1478.48,792.68 1484.43,791.94 1490.37,790.72 1496.48,791.83 1502.42,790.65 1508.37,791.21 1514.48,792.13 1520.42,792.53 1526.53,793.1 1532.47,793.65 1538.42,793.69 1544.53,792.16" fill="none" stroke="#7EB26D" stroke-width="1.1" stroke-linejoin="round"/>
<polyline points="978.94,699.43 981.9,699.92 987.81,696.97 993.89,697.46 999.81,699.1 1005.89,700.58 1011.8,698.77 1017.88,698.12 1023.8,699.76 1029.87,697.95 1035.79,698.12 1041.87,699.43 1047.78,694.99 1053.86,698.61 1059.78,697.79 1065.85,697.46 1071.77,697.46 1077.85,695.49 1083.76,696.47 1089.84,699.59 1095.76,699.43 1101.83,698.94 1107.75,698.77 1113.83,697.46 1119.74,695.16 1125.82,696.47 1131.74,698.12 1137.81,697.29 1143.73,698.94 1149.81,698.94 1155.72,698.94 1161.8,697.95 1167.72,700.09 1173.8,699.43 1179.71,696.64 1185.79,695.98 1191.7,696.8 1197.78,696.97 1203.7,696.8 1209.78,696.8 1215.69,697.95 1221.77,701.57 1227.68,702.88 1233.76,699.43 1239.68,700.25 1245.76,701.57 1251.67,698.94 1257.75,698.44 1263.66,697.29 1265,696.75 1268.3,695.27 1274.41,699.06 1280.35,698.24 1286.46,697.41 1292.41,696.09 1298.35,683.54 1304.46,698.24 1310.4,698.57 1316.35,698.73 1322.46,697.25 1328.4,699.72 1334.35,699.39 1340.45,695.43 1346.4,695.43 1352.34,696.75 1358.45,697.25 1364.39,697.74 1370.34,698.57 1376.45,698.4 1382.39,699.56 1388.34,696.92 1394.44,697.41 1400.39,698.73 1406.5,699.72 1412.44,699.06 1418.38,697.91 1424.49,699.39 1430.44,699.56 1436.38,698.57 1442.49,700.39 1448.43,698.73 1454.38,698.24 1460.49,697.91 1466.43,698.07 1472.37,649.2 1478.48,696.42 1484.43,697.25 1490.37,697.58 1496.48,697.74 1502.42,618.66 1508.37,617.34 1514.48,695.27 1520.42,614.69 1526.53,695.27 1532.47,700.06 1538.42,695.76 1544.53,695.27" fill="none" stroke="#EAB839" stroke-width="1.2" stroke-linejoin="round"/>
<polyline points="978.94,788.89 981.9,788.5 987.81,789.14 993.89,789.97 999.81,790.98 1005.89,789.83 1011.8,789.77 1017.88,789.05 1023.8,789.66 1029.87,788.97 1035.79,789.87 1041.87,788.99 1047.78,788.77 1053.86,789.43 1059.78,789.43 1065.85,789.08 1071.77,790.11 1077.85,789.7 1083.76,788.91 1089.84,789.86 1095.76,788.98 1101.83,788.87 1107.75,788.44 1113.83,789.48 1119.74,790.53 1125.82,789.29 1131.74,788.72 1137.81,789.34 1143.73,790.47 1149.81,790.72 1155.72,789.78 1161.8,790.19 1167.72,788.77 1173.8,789.01 1179.71,790.06 1185.79,789.43 1191.7,789.86 1197.78,788.67 1203.7,788.19 1209.78,788.93 1215.69,788.95 1221.77,788.83 1227.68,788.51 1233.76,787.96 1239.68,790 1245.76,790.12 1251.67,789.59 1257.75,790.07 1263.66,789.59 1265,790.59 1268.3,789.13 1274.41,789.33 1280.35,790.4 1286.46,789.57 1292.41,790.04 1298.35,790.53 1304.46,790.06 1310.4,790.68 1316.35,790.79 1322.46,789.25 1328.4,788.96 1334.35,790.49 1340.45,789.33 1346.4,790.65 1352.34,790.48 1358.45,789.02 1364.39,789.05 1370.34,789.82 1376.45,790 1382.39,790.05 1388.34,790.7 1394.44,788.89 1400.39,790.36 1406.5,790.13 1412.44,789.24 1418.38,789.69 1424.49,788.47 1430.44,789.71 1436.38,788.49 1442.49,788.15 1448.43,788.54 1454.38,788.18 1460.49,789.09 1466.43,788.57 1472.37,788.42 1478.48,789.03 1484.43,789.41 1490.37,789.02 1496.48,789.56 1502.42,790.58 1508.37,789.45 1514.48,790.1 1520.42,789.85 1526.53,789.03 1532.47,790.14 1538.42,791 1544.53,791.14" fill="none" stroke="#6ED0E0" stroke-width="1.1" stroke-linejoin="round"/>
<polyline points="978.94,790.96 981.9,789.48 987.81,790.83 993.89,790.04 999.81,791.19 1005.89,791.31 1011.8,789.55 1017.88,790.66 1023.8,790.12 1029.87,790.32 1035.79,790.42 1041.87,790.37 1047.78,791.07 1053.86,789.85 1059.78,791.09 1065.85,791.3 1071.77,791.91 1077.85,791.59 1083.76,791.1 1089.84,789.69 1095.76,790.32 1101.83,791.24 1107.75,791.31 1113.83,789.56 1119.74,791.03 1125.82,790.34 1131.74,790.61 1137.81,790.05 1143.73,790.58 1149.81,789.96 1155.72,790.15 1161.8,789.87 1167.72,789.14 1173.8,789.58 1179.71,790.84 1185.79,791.6 1191.7,789.8 1197.78,790.1 1203.7,790.95 1209.78,789.51 1215.69,789.76 1221.77,789.5 1227.68,789.02 1233.76,790.24 1239.68,790.62 1245.76,789.53 1251.67,790.84 1257.75,789.9 1263.66,791.09 1265,790.2 1268.3,789.76 1274.41,788.97 1280.35,788.87 1286.46,789.65 1292.41,790.74 1298.35,791.34 1304.46,790.7 1310.4,790.46 1316.35,791.41 1322.46,789.82 1328.4,790.07 1334.35,789.71 1340.45,790.71 1346.4,791.1 1352.34,791.84 1358.45,791.37 1364.39,791.35 1370.34,790.96 1376.45,790.89 1382.39,789.76 1388.34,789.11 1394.44,790.55 1400.39,790.66 1406.5,791.27 1412.44,790.34 1418.38,789.17 1424.49,790.51 1430.44,789.75 1436.38,790.54 1442.49,791.58 1448.43,790.24 1454.38,790.66 1460.49,791.26 1466.43,790.89 1472.37,791.21 1478.48,790.93 1484.43,790.71 1490.37,790.68 1496.48,790.26 1502.42,790.79 1508.37,791.5 1514.48,791.84 1520.42,791.95 1526.53,790.99 1532.47,790.95 1538.42,789.85 1544.53,790.08" fill="none" stroke="#EF843C" stroke-width="1.1" stroke-linejoin="round"/>
<polyline points="978.94,701.07 981.9,702.22 987.81,698.77 993.89,699.59 999.81,709.45 1005.89,702.88 1011.8,699.92 1017.88,700.09 1023.8,702.22 1029.87,700.74 1035.79,703.21 1041.87,703.21 1047.78,698.44 1053.86,700.42 1059.78,698.28 1065.85,698.12 1071.77,698.12 1077.85,697.95 1083.76,701.07 1089.84,703.04 1095.76,705.84 1101.83,701.73 1107.75,700.42 1113.83,699.1 1119.74,697.95 1125.82,699.76 1131.74,699.27 1137.81,698.44 1143.73,706.5 1149.81,702.22 1155.72,706.17 1161.8,701.4 1167.72,700.58 1173.8,699.92 1179.71,697.79 1185.79,697.13 1191.7,697.46 1197.78,697.62 1203.7,697.62 1209.78,697.62 1215.69,698.28 1221.77,718 1227.68,711.59 1233.76,708.96 1239.68,705.84 1245.76,703.87 1251.67,699.92 1257.75,699.92 1263.66,701.57 1265,700.39 1268.3,698.07 1274.41,702.7 1280.35,701.21 1286.46,700.22 1292.41,703.69 1298.35,699.56 1304.46,700.39 1310.4,699.89 1316.35,702.04 1322.46,700.06 1328.4,711.61 1334.35,708.15 1340.45,706.99 1346.4,700.06 1352.34,698.24 1358.45,698.07 1364.39,699.06 1370.34,700.39 1376.45,702.7 1382.39,704.51 1388.34,700.55 1394.44,699.56 1400.39,701.05 1406.5,700.55 1412.44,699.89 1418.38,698.24 1424.49,701.05 1430.44,705.34 1436.38,700.22 1442.49,704.51 1448.43,701.54 1454.38,702.53 1460.49,702.04 1466.43,700.22 1472.37,698.9 1478.48,700.72 1484.43,699.06 1490.37,699.72 1496.48,699.06 1502.42,696.09 1508.37,697.25 1514.48,702.7 1520.42,646.73 1526.53,698.73 1532.47,705.01 1538.42,706.49 1544.53,704.02" fill="none" stroke="#E24D42" stroke-width="1.2" stroke-linejoin="round"/>
</svg>
<div class="txt">
<div class="t title" style="left:300.5px;top:5px;width:300px;">Connection Count</div>
<div class="t yl" style="left:-38px;top:30px;width:80px;">2.5 K</div>
<div class="t yl" style="left:-38px;top:70px;width:80px;">2.0 K</div>
<div class="t yl" style="left:-38px;top:110px;width:80px;">1.5 K</div>
<div class="t yl" style="left:-38px;top:151px;width:80px;">1.0 K</div>
<div class="t yl" style="left:-38px;top:191px;width:80px;">500</div>
<div class="t yl" style="left:-38px;top:231px;width:80px;">0</div>
<div class="t xl" style="left:48px;top:245px;width:60px;">18:00</div>
<div class="t xl" style="left:113px;top:245px;width:60px;">18:05</div>
<div class="t xl" style="left:178px;top:245px;width:60px;">18:10</div>
<div class="t xl" style="left:243px;top:245px;width:60px;">18:15</div>
<div class="t xl" style="left:308px;top:245px;width:60px;">18:20</div>
<div class="t xl" style="left:374px;top:245px;width:60px;">18:25</div>
<div class="t xl" style="left:439px;top:245px;width:60px;">18:30</div>
<div class="t xl" style="left:504px;top:245px;width:60px;">18:35</div>
<div class="t xl" style="left:569px;top:245px;width:60px;">18:40</div>
<div class="t xl" style="left:635px;top:245px;width:60px;">18:45</div>
<div class="t lh" style="left:794px;top:36px;width:80px;">current</div>
<div class="row odd" style="left:691px;top:53px;width:193px;"></div>
<div class="sw" style="left:701px;top:66.4px;background:#7EB26D"></div>
<div class="t ll" style="left:720px;top:59px;">test-tidb-tidb-0</div>
<div class="t lv" style="left:794px;top:59px;width:80px;">361</div>
<div class="row" style="left:691px;top:79px;width:193px;"></div>
<div class="sw" style="left:701px;top:92.4px;background:#EAB839"></div>
<div class="t ll" style="left:720px;top:85px;">test-tidb-tidb-1</div>
<div class="t lv" style="left:794px;top:85px;width:80px;">332</div>
<div class="row odd" style="left:691px;top:105px;width:193px;"></div>
<div class="sw" style="left:701px;top:118.4px;background:#6ED0E0"></div>
<div class="t ll" style="left:720px;top:111px;">test-tidb-tidb-2</div>
<div class="t lv" style="left:794px;top:111px;width:80px;">331</div>
<div class="row" style="left:691px;top:131px;width:193px;"></div>
<div class="sw" style="left:701px;top:144.4px;background:#EF843C"></div>
<div class="t ll" style="left:720px;top:137px;">total</div>
<div class="t lv" style="left:794px;top:137px;width:80px;">1.024 K</div>
<div class="t title" style="left:1220px;top:5px;width:300px;">Memory Usage</div>
<div class="t yl" style="left:882px;top:30px;width:80px;letter-spacing:-0.35px;">9 GiB</div>
<div class="t yl" style="left:882px;top:70px;width:80px;letter-spacing:-0.35px;">7 GiB</div>
<div class="t yl" style="left:882px;top:110px;width:80px;letter-spacing:-0.35px;">6 GiB</div>
<div class="t yl" style="left:882px;top:151px;width:80px;letter-spacing:-0.35px;">4 GiB</div>
<div class="t yl" style="left:882px;top:191px;width:80px;letter-spacing:-0.35px;">2 GiB</div>
<div class="t yl" style="left:882px;top:231px;width:80px;letter-spacing:-0.35px;">0 B</div>
<div class="t xl" style="left:961px;top:245px;width:60px;">18:00</div>
<div class="t xl" style="left:1063px;top:245px;width:60px;">18:10</div>
<div class="t xl" style="left:1165px;top:245px;width:60px;">18:20</div>
<div class="t xl" style="left:1267px;top:245px;width:60px;">18:30</div>
<div class="t xl" style="left:1369px;top:245px;width:60px;">18:40</div>
<div class="t lh" style="left:1643px;top:36px;width:80px;">max</div>
<div class="t lh" style="left:1713px;top:36px;width:80px;">current</div>
<div class="row odd" style="left:1475px;top:53px;width:328px;"></div>
<div class="sw" style="left:1485px;top:66.4px;background:#7EB26D"></div>
<div class="t ll" style="left:1504px;top:59px;">process-test-tidb-tidb-0</div>
<div class="t lv" style="left:1643px;top:59px;width:80px;letter-spacing:-0.25px;">8.05 GiB</div>
<div class="t lv" style="left:1713px;top:59px;width:80px;letter-spacing:-0.25px;">8.05 GiB</div>
<div class="row" style="left:1475px;top:79px;width:328px;"></div>
<div class="sw" style="left:1485px;top:92.4px;background:#EAB839"></div>
<div class="t ll" style="left:1504px;top:85px;">process-test-tidb-tidb-1</div>
<div class="t lv" style="left:1643px;top:85px;width:80px;letter-spacing:-0.25px;">7.90 GiB</div>
<div class="t lv" style="left:1713px;top:85px;width:80px;letter-spacing:-0.25px;">7.90 GiB</div>
<div class="row odd" style="left:1475px;top:105px;width:328px;"></div>
<div class="sw" style="left:1485px;top:118.4px;background:#6ED0E0"></div>
<div class="t ll" style="left:1504px;top:111px;">process-test-tidb-tidb-2</div>
<div class="t lv" style="left:1643px;top:111px;width:80px;letter-spacing:-0.25px;">7.24 GiB</div>
<div class="t lv" style="left:1713px;top:111px;width:80px;letter-spacing:-0.25px;">7.24 GiB</div>
<div class="row" style="left:1475px;top:131px;width:328px;"></div>
<div class="sw" style="left:1485px;top:144.4px;background:#EF843C"></div>
<div class="t ll" style="left:1504px;top:137px;">HeapInuse-test-tidb-tidb-0</div>
<div class="t lv" style="left:1643px;top:137px;width:80px;letter-spacing:-0.25px;">3.03 GiB</div>
<div class="t lv" style="left:1713px;top:137px;width:80px;letter-spacing:-0.25px;">2.55 GiB</div>
<div class="row odd" style="left:1475px;top:157px;width:328px;"></div>
<div class="sw" style="left:1485px;top:170.4px;background:#E24D42"></div>
<div class="t ll" style="left:1504px;top:163px;">HeapInuse-test-tidb-tidb-1</div>
<div class="t lv" style="left:1643px;top:163px;width:80px;letter-spacing:-0.25px;">2.93 GiB</div>
<div class="t lv" style="left:1713px;top:163px;width:80px;letter-spacing:-0.25px;">2.37 GiB</div>
<div class="row" style="left:1475px;top:183px;width:328px;"></div>
<div class="sw" style="left:1485px;top:196.4px;background:#1F78C1"></div>
<div class="t ll" style="left:1504px;top:189px;">HeapInuse-test-tidb-tidb-2</div>
<div class="t lv" style="left:1643px;top:189px;width:80px;letter-spacing:-0.25px;">2.92 GiB</div>
<div class="t lv" style="left:1713px;top:189px;width:80px;letter-spacing:-0.25px;">2.86 GiB</div>
<div class="t title" style="left:300.5px;top:285px;width:300px;">Transaction OPS</div>
<div class="t yl" style="left:-38px;top:310px;width:80px;">2.5 K</div>
<div class="t yl" style="left:-38px;top:345px;width:80px;">2.0 K</div>
<div class="t yl" style="left:-38px;top:380px;width:80px;">1.5 K</div>
<div class="t yl" style="left:-38px;top:416px;width:80px;">1.0 K</div>
<div class="t yl" style="left:-38px;top:451px;width:80px;">500</div>
<div class="t yl" style="left:-38px;top:486px;width:80px;">0</div>
<div class="t xl" style="left:57px;top:499.7px;width:60px;">18:00</div>
<div class="t xl" style="left:144px;top:499.7px;width:60px;">18:05</div>
<div class="t xl" style="left:230px;top:499.7px;width:60px;">18:10</div>
<div class="t xl" style="left:317px;top:499.7px;width:60px;">18:15</div>
<div class="t xl" style="left:403px;top:499.7px;width:60px;">18:20</div>
<div class="t xl" style="left:490px;top:499.7px;width:60px;">18:25</div>
<div class="t xl" style="left:576px;top:499.7px;width:60px;">18:30</div>
<div class="t xl" style="left:663px;top:499.7px;width:60px;">18:35</div>
<div class="t xl" style="left:749px;top:499.7px;width:60px;">18:40</div>
<div class="t xl" style="left:836px;top:499.7px;width:60px;">18:45</div>
<div class="sw" style="left:24px;top:530.4px;background:#7EB26D"></div>
<div class="t ll" style="left:40px;top:525px;">abort</div>
<div class="t ll" style="left:74.6px;top:525px;">Max: 0</div>
<div class="t ll" style="left:116px;top:525px;">Current: 0</div>
<div class="sw" style="left:177.6px;top:530.4px;background:#EAB839"></div>
<div class="t ll" style="left:193.7px;top:525px;">commit</div>
<div class="t ll" style="left:240.5px;top:525px;">Max: 2.034 K</div>
<div class="t ll" style="left:316px;top:525px;">Current: 1.772 K</div>
<div class="sw" style="left:411.5px;top:530.4px;background:#6ED0E0"></div>
<div class="t ll" style="left:427.5px;top:525px;">rollback</div>
<div class="t ll" style="left:475.5px;top:525px;">Max: 9</div>
<div class="t ll" style="left:517.5px;top:525px;">Current: 7</div>
<div class="t title" style="left:1220px;top:285px;width:300px;">Transaction Duration</div>
<div class="t yl" style="left:893px;top:310px;width:80px;">2.0 s</div>
<div class="t yl" style="left:893px;top:398px;width:80px;">1.0 s</div>
<div class="t yl" style="left:893px;top:486px;width:80px;">500 ms</div>
<div class="t xl" style="left:987px;top:499.7px;width:60px;">18:00</div>
<div class="t xl" style="left:1073px;top:499.7px;width:60px;">18:05</div>
<div class="t xl" style="left:1158px;top:499.7px;width:60px;">18:10</div>
<div class="t xl" style="left:1243px;top:499.7px;width:60px;">18:15</div>
<div class="t xl" style="left:1329px;top:499.7px;width:60px;">18:20</div>
<div class="t xl" style="left:1414px;top:499.7px;width:60px;">18:25</div>
<div class="t xl" style="left:1499px;top:499.7px;width:60px;">18:30</div>
<div class="t xl" style="left:1584px;top:499.7px;width:60px;">18:35</div>
<div class="t xl" style="left:1670px;top:499.7px;width:60px;">18:40</div>
<div class="t xl" style="left:1755px;top:499.7px;width:60px;">18:45</div>
<div class="sw" style="left:943px;top:530.4px;background:#7EB26D"></div>
<div class="t ll" style="left:959px;top:525px;">99</div>
<div class="sw" style="left:982px;top:530.4px;background:#EAB839"></div>
<div class="t ll" style="left:998px;top:525px;">95</div>
<div class="sw" style="left:1021px;top:530.4px;background:#6ED0E0"></div>
<div class="t ll" style="left:1037px;top:525px;">80</div>
<div class="t title" style="left:300.5px;top:565px;width:300px;">KV Cmd OPS</div>
<div class="t yl" style="left:-41px;top:590px;width:80px;">50 K</div>
<div class="t yl" style="left:-41px;top:630px;width:80px;">40 K</div>
<div class="t yl" style="left:-41px;top:670px;width:80px;">30 K</div>
<div class="t yl" style="left:-41px;top:711px;width:80px;">20 K</div>
<div class="t yl" style="left:-41px;top:751px;width:80px;">10 K</div>
<div class="t yl" style="left:-41px;top:791px;width:80px;">0</div>
<div class="t xl" style="left:42px;top:805px;width:60px;">18:00</div>
<div class="t xl" style="left:105px;top:805px;width:60px;">18:05</div>
<div class="t xl" style="left:168px;top:805px;width:60px;">18:10</div>
<div class="t xl" style="left:231px;top:805px;width:60px;">18:15</div>
<div class="t xl" style="left:294px;top:805px;width:60px;">18:20</div>
<div class="t xl" style="left:357px;top:805px;width:60px;">18:25</div>
<div class="t xl" style="left:419px;top:805px;width:60px;">18:30</div>
<div class="t xl" style="left:482px;top:805px;width:60px;">18:35</div>
<div class="t xl" style="left:545px;top:805px;width:60px;">18:40</div>
<div class="t xl" style="left:608px;top:805px;width:60px;">18:45</div>
<div class="t lh" style="left:735px;top:596px;width:80px;">max</div>
<div class="t lh" style="left:794px;top:596px;width:80px;">current</div>
<div class="row odd" style="left:664px;top:613px;width:220px;"></div>
<div class="sw" style="left:674px;top:626.4px;background:#7EB26D"></div>
<div class="t ll" style="left:693px;top:619px;">batch_get</div>
<div class="t lv" style="left:735px;top:619px;width:80px;">1.9 K</div>
<div class="t lv" style="left:794px;top:619px;width:80px;">1.7 K</div>
<div class="row" style="left:664px;top:639px;width:220px;"></div>
<div class="sw" style="left:674px;top:652.4px;background:#EAB839"></div>
<div class="t ll" style="left:693px;top:645px;">commit</div>
<div class="t lv" style="left:735px;top:645px;width:80px;">1.8 K</div>
<div class="t lv" style="left:794px;top:645px;width:80px;">1.5 K</div>
<div class="row odd" style="left:664px;top:665px;width:220px;"></div>
<div class="sw" style="left:674px;top:678.4px;background:#6ED0E0"></div>
<div class="t ll" style="left:693px;top:671px;">get</div>
<div class="t lv" style="left:735px;top:671px;width:80px;">6.3 K</div>
<div class="t lv" style="left:794px;top:671px;width:80px;">5.5 K</div>
<div class="row" style="left:664px;top:691px;width:220px;"></div>
<div class="sw" style="left:674px;top:704.4px;background:#EF843C"></div>
<div class="t ll" style="left:693px;top:697px;">lock_keys</div>
<div class="t lv" style="left:735px;top:697px;width:80px;">46.0 K</div>
<div class="t lv" style="left:794px;top:697px;width:80px;">39.8 K</div>
<div class="row odd" style="left:664px;top:717px;width:220px;"></div>
<div class="sw" style="left:674px;top:730.4px;background:#E24D42"></div>
<div class="t ll" style="left:693px;top:723px;">rollback</div>
<div class="t lv" style="left:735px;top:723px;width:80px;">10</div>
<div class="t lv" style="left:794px;top:723px;width:80px;">7</div>
<div class="t title" style="left:1220px;top:565px;width:300px;">KV Cmd Duration 99</div>
<div class="t yl" style="left:893px;top:590px;width:80px;">2.0 s</div>
<div class="t yl" style="left:893px;top:640px;width:80px;">1.5 s</div>
<div class="t yl" style="left:893px;top:691px;width:80px;">1.0 s</div>
<div class="t yl" style="left:893px;top:741px;width:80px;">500 ms</div>
<div class="t yl" style="left:893px;top:791px;width:80px;">0 ns</div>
<div class="t xl" style="left:976px;top:805px;width:60px;">18:00</div>
<div class="t xl" style="left:1096px;top:805px;width:60px;">18:10</div>
<div class="t xl" style="left:1215px;top:805px;width:60px;">18:20</div>
<div class="t xl" style="left:1335px;top:805px;width:60px;">18:30</div>
<div class="t xl" style="left:1455px;top:805px;width:60px;">18:40</div>
<div class="t lh" style="left:1648px;top:596px;width:80px;">max</div>
<div class="t lh" style="left:1713px;top:596px;width:80px;">current</div>
<div class="row odd" style="left:1571px;top:613px;width:232px;"></div>
<div class="sw" style="left:1581px;top:626.4px;background:#7EB26D"></div>
<div class="t ll" style="left:1600px;top:619px;">batch_get</div>
<div class="t lv" style="left:1648px;top:619px;width:80px;">148 ms</div>
<div class="t lv" style="left:1713px;top:619px;width:80px;">63 ms</div>
<div class="row" style="left:1571px;top:639px;width:232px;"></div>
<div class="sw" style="left:1581px;top:652.4px;background:#EAB839"></div>
<div class="t ll" style="left:1600px;top:645px;">commit</div>
<div class="t lv" style="left:1648px;top:645px;width:80px;">1.823 s</div>
<div class="t lv" style="left:1713px;top:645px;width:80px;">1.019 s</div>
<div class="row odd" style="left:1571px;top:665px;width:232px;"></div>
<div class="sw" style="left:1581px;top:678.4px;background:#6ED0E0"></div>
<div class="t ll" style="left:1600px;top:671px;">get</div>
<div class="t lv" style="left:1648px;top:671px;width:80px;">114 ms</div>
<div class="t lv" style="left:1713px;top:671px;width:80px;">98 ms</div>
<div class="row" style="left:1571px;top:691px;width:232px;"></div>
<div class="sw" style="left:1581px;top:704.4px;background:#EF843C"></div>
<div class="t ll" style="left:1600px;top:697px;">lock_keys</div>
<div class="t lv" style="left:1648px;top:697px;width:80px;">103 ms</div>
<div class="t lv" style="left:1713px;top:697px;width:80px;">99 ms</div>
<div class="row odd" style="left:1571px;top:717px;width:232px;"></div>
<div class="sw" style="left:1581px;top:730.4px;background:#E24D42"></div>
<div class="t ll" style="left:1600px;top:723px;">rollback</div>
<div class="t lv" style="left:1648px;top:723px;width:80px;">1.510 s</div>
<div class="t lv" style="left:1713px;top:723px;width:80px;">936 ms</div>
</div>
<div class="b1"></div><div class="b2"></div><div class="dockend"></div><div class="dock"></div><div class="ic" style="left:547px;width:10px;background:#e8403a;border-radius:5px 5px 0 0"></div><div class="ic" style="left:854px;width:14px;background:#7a4ff0;border-radius:2px 2px 0 0"></div><div class="ic" style="left:890px;width:5px;background:#d8406a;border-radius:3px 3px 0 0"></div><div class="ic" style="left:924px;width:8px;background:#22d08a;border-radius:2px 2px 0 0"></div><div class="ic" style="left:940px;width:10px;background:#22d08a;border-radius:3px 3px 0 0"></div><div class="ic" style="left:1017px;width:15px;background:#34c759;border-radius:7px 7px 0 0"></div><div class="ic" style="left:1178px;width:15px;background:#0d62b5;border-radius:7px 7px 0 0"></div><div class="ic" style="left:1248px;width:36px;background:#0a84ee;border-radius:4px 4px 0 0"></div><div class="ic" style="left:1289px;width:34px;background:#000000;border-radius:4px 4px 0 0"></div><div class="ic" style="left:1417px;width:2px;background:#d0e8f0;border-radius:1px 1px 0 0"></div><div class="ic" style="left:1453px;width:10px;background:#e8403a;border-radius:5px 5px 0 0"></div><div class="ic" style="left:1493px;width:10px;background:#e8403a;border-radius:5px 5px 0 0"></div><div class="ic" style="left:1571px;width:13px;background:#e8403a;border-radius:6px 6px 0 0"></div><div class="ic" style="left:1615px;width:9px;background:#e8403a;border-radius:5px 5px 0 0"></div><div class="ic" style="left:1739px;width:10px;background:#b0a0b0;border-radius:1px 1px 0 0"></div><div class="ic" style="left:1782px;width:10px;background:#c0b0c0;border-radius:1px 1px 0 0"></div>
</body></html>
